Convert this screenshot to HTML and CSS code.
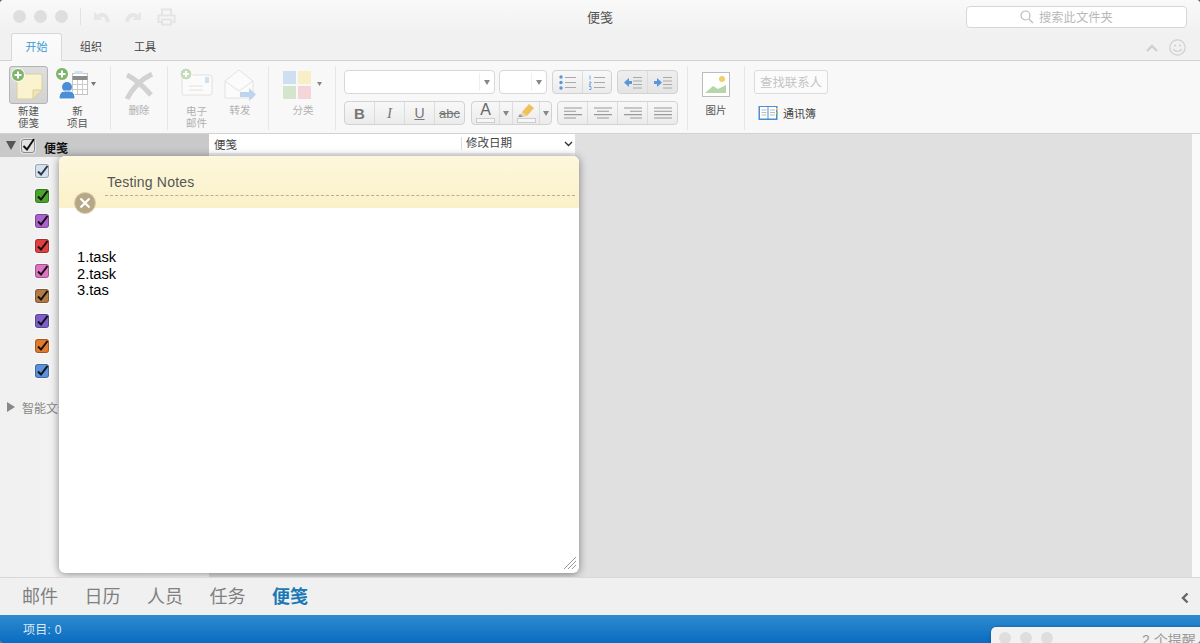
FILE: index.html
```html
<!DOCTYPE html>
<html lang="zh">
<head>
<meta charset="utf-8">
<title>便笺</title>
<link rel="stylesheet" href="styles.css">
</head>
<body>
<div class="window">
  <header class="titlebar">
    <div class="lights"><i></i><i></i><i></i></div>
    <span class="vsep"></span>
    <svg class="qa" width="18" height="16" viewBox="0 0 18 16"><path d="M1 2.500v8.500h8.500z" fill="#e6e6e6"/><path d="M5 8C8 4.500 13.500 5 15 13" fill="none" stroke="#e6e6e6" stroke-width="4"/></svg>
    <svg class="qa qa2" width="18" height="16" viewBox="0 0 18 16"><path d="M17 2.500v8.500H8.500z" fill="#e6e6e6"/><path d="M13 8C10 4.500 4.500 5 3 13" fill="none" stroke="#e6e6e6" stroke-width="4"/></svg>
    <svg class="qa qa3" width="19" height="18" viewBox="0 0 19 18"><path d="M5 7V1.500h9V7M5 14H1.500V7.500h16V14H14M5 11.500h9v5H5z" fill="#f6f6f6" stroke="#e4e4e4" stroke-width="2"/></svg>
    <h1 class="wintitle">便笺</h1>
    <div class="search">
      <svg width="14" height="14" viewBox="0 0 14 14"><circle cx="5.500" cy="5.500" r="4.500" fill="none" stroke="#bbb" stroke-width="1.200"/><path d="M9 9l4 4" stroke="#bbb" stroke-width="1.300"/></svg>
      <span>搜索此文件夹</span>
    </div>
  </header>

  <nav class="tabs">
    <a class="tab active">开始</a>
    <a class="tab">组织</a>
    <a class="tab">工具</a>
    <svg class="collapse" width="12" height="8" viewBox="0 0 12 8"><path d="M1 7l5-5 5 5" fill="none" stroke="#d0d0d0" stroke-width="2.400"/></svg>
    <svg class="smile" width="17" height="17" viewBox="0 0 17 17"><circle cx="8.500" cy="8.500" r="7.700" fill="none" stroke="#cfcfcf" stroke-width="1.200"/><circle cx="6" cy="6.500" r="1" fill="#cfcfcf"/><circle cx="11" cy="6.500" r="1" fill="#cfcfcf"/><path d="M4.500 10c1 3 7 3 8 0" fill="none" stroke="#cfcfcf" stroke-width="1.200"/></svg>
  </nav>

  <section class="ribbon">
    <div class="group g1">
      <div class="tool t-note">
        <div class="ticon pressed">
          <svg width="39" height="38" viewBox="0 0 39 38"><path d="M8 8h25v16l-9 9H8z" fill="#fbf3cf" stroke="#d9cf9f"/><path d="M33 24h-9v9z" fill="#efe4b3" stroke="#d9cf9f"/><circle cx="9" cy="9" r="6.500" fill="#7db56a" stroke="#fff"/><path d="M9 5.500v7M5.500 9h7" stroke="#fff" stroke-width="2"/></svg>
        </div>
        <div class="tlabel on">新建<br>便笺</div>
      </div>
      <div class="tool t-item">
        <div class="ticon">
          <svg width="45" height="39" viewBox="0 0 45 39"><rect x="17.500" y="7.500" width="15" height="21" fill="#fff" stroke="#c4c4c4"/><rect x="17.500" y="10" width="15" height="4" fill="#8c8c8c"/><path d="M22.500 14v14M27.500 14v14M17.500 18.500h15M17.500 23.500h15" stroke="#ccc"/><rect x="20" y="5" width="8" height="3" fill="#cfe0f2"/><circle cx="12" cy="21" r="5" fill="#4a8fd6"/><path d="M4 33c0-8 4-8 8-8s8 0 8 8z" fill="#4a8fd6" stroke="#fff"/><circle cx="7" cy="8" r="6.500" fill="#7db56a" stroke="#fff"/><path d="M7 4.500v7M3.500 8h7" stroke="#fff" stroke-width="2"/><path d="M36 16h5l-2.500 4z" fill="#777"/></svg>
        </div>
        <div class="tlabel on">新<br>项目</div>
      </div>
    </div>

    <div class="group g2">
      <div class="tool t-del">
        <div class="ticon">
          <svg width="30" height="39" viewBox="0 0 30 39"><path d="M3 9c8 4 17 12 24 20M28 8C18 13 9 21 3 33" fill="none" stroke="#d2d2d2" stroke-width="5"/></svg>
        </div>
        <div class="tlabel off up">删除</div>
      </div>
    </div>

    <div class="group g3">
      <div class="tool t-mail">
        <div class="ticon">
          <svg width="33" height="39" viewBox="0 0 33 39"><rect x="2" y="9" width="30" height="20" rx="2" fill="#fbfbfb" stroke="#e0e0e0"/><rect x="25" y="11" width="4" height="6" fill="#cfe0f2"/><path d="M9 20h14M9 24h14" stroke="#e0e0e0"/><circle cx="6" cy="8" r="6" fill="#c3dcb9" stroke="#fff"/><path d="M6 5v6M3 8h6" stroke="#fff" stroke-width="2"/></svg>
        </div>
        <div class="tlabel off">电子<br>邮件</div>
      </div>
      <div class="tool t-fwd">
        <div class="ticon">
          <svg width="32" height="39" viewBox="0 0 32 39"><path d="M1 15L15 4l14 11v17H1z" fill="#fbfbfb" stroke="#e2e2e2"/><path d="M1 15l14 10 14-10" fill="none" stroke="#e2e2e2"/><path d="M16 26h9v-4l7 6.500-7 6.500v-4h-9z" fill="#bcd4ee"/></svg>
        </div>
        <div class="tlabel off up">转发</div>
      </div>
    </div>

    <div class="group g4">
      <div class="tool t-cat">
        <div class="ticon">
          <svg width="40" height="39" viewBox="0 0 40 39"><rect x="0" y="5" width="13" height="13" fill="#cfdff2"/><rect x="15" y="5" width="13" height="13" fill="#f8efc8"/><rect x="0" y="20" width="13" height="13" fill="#d5e4cc"/><rect x="15" y="20" width="13" height="13" fill="#f3d5da"/><path d="M34 16h5l-2.500 4z" fill="#888"/></svg>
        </div>
        <div class="tlabel off up">分类</div>
      </div>
    </div>

    <div class="group g5">
      <div class="fmt-row">
        <div class="combo c-font"><span class="caret-box"><span class="caret"></span></span></div>
        <div class="combo c-size"><span class="caret-box"><span class="caret"></span></span></div>
        <div class="seg s-list">
          <button><svg width="17" height="15" viewBox="0 0 17 15"><path d="M6 2.500h11M6 7.500h11M6 12.500h11" stroke="#aaa" stroke-width="1.200"/><circle cx="2" cy="2" r="1.700" fill="#5a96dc"/><circle cx="2" cy="7.500" r="1.700" fill="#5a96dc"/><circle cx="2" cy="13" r="1.700" fill="#5a96dc"/></svg></button>
          <button><svg width="17" height="15" viewBox="0 0 17 15"><path d="M6 2.500h11M6 7.500h11M6 12.500h11" stroke="#aaa" stroke-width="1.200"/><path d="M2 .5v4M1 7h2v1l-2 1.500v.5h2M1 11.500h2v3H1" fill="none" stroke="#5a96dc" stroke-width=".8"/></svg></button>
        </div>
        <div class="seg s-indent">
          <button><svg width="18" height="13" viewBox="0 0 18 13"><path d="M0 6.500L5 2v3h3v3H5v3z" fill="#5a96dc"/><path d="M9 1.500h9M9 5h9M9 8.500h9M9 12h9" stroke="#aaa" stroke-width="1.100"/></svg></button>
          <button><svg width="18" height="13" viewBox="0 0 18 13"><path d="M8 6.500L3 2v3H0v3h3v3z" fill="#5a96dc"/><path d="M9 1.500h9M9 5h9M9 8.500h9M9 12h9" stroke="#aaa" stroke-width="1.100"/></svg></button>
        </div>
      </div>
      <div class="fmt-row">
        <div class="seg s-style">
          <button class="b-b">B</button>
          <button class="b-i">I</button>
          <button class="b-u">U</button>
          <button class="b-s">abc</button>
        </div>
        <div class="seg s-color">
          <button class="wide"><span class="a-mark">A</span><i class="swatch"></i></button>
          <button class="narrow"><span class="caret dark"></span></button>
          <button class="wide"><svg width="20" height="14" viewBox="0 0 20 14"><path d="M6 9L13 1l5 4-7 8z" fill="#f0c05a"/><path d="M6 9l5 4-3 1-4-1z" fill="#e6d7a8"/><path d="M2 14h5l-3-3z" fill="#999"/></svg><i class="swatch"></i></button>
          <button class="narrow"><span class="caret dark"></span></button>
        </div>
        <div class="seg s-align">
          <button><svg class="al" width="18" height="12" viewBox="0 0 18 12"><path d="M0 1h18M0 4.300h12M0 7.600h18M0 11h12" stroke="#999" stroke-width="1.100"/></svg></button>
          <button><svg class="al" width="18" height="12" viewBox="0 0 18 12"><path d="M0 1h18M3 4.300h12M0 7.600h18M3 11h12" stroke="#999" stroke-width="1.100"/></svg></button>
          <button><svg class="al" width="18" height="12" viewBox="0 0 18 12"><path d="M0 1h18M6 4.300h12M0 7.600h18M6 11h12" stroke="#999" stroke-width="1.100"/></svg></button>
          <button><svg class="al" width="18" height="12" viewBox="0 0 18 12"><path d="M0 1h18M0 4.300h18M0 7.600h18M0 11h18" stroke="#999" stroke-width="1.100"/></svg></button>
        </div>
      </div>
    </div>

    <div class="group g6">
      <div class="tool t-pic">
        <div class="ticon">
          <svg width="28" height="39" viewBox="0 0 28 39"><rect x=".5" y="6.500" width="27" height="24" fill="#fff" stroke="#bbb"/><path d="M3 27l8-7 5 3 8-4v8H3z" fill="#b5d6a8"/><circle cx="20" cy="13" r="3" fill="#f0cf6a"/></svg>
        </div>
        <div class="tlabel on up">图片</div>
      </div>
    </div>

    <div class="group g7">
      <div class="find">查找联系人</div>
      <div class="abook">
        <svg width="20" height="16" viewBox="0 0 20 16"><path d="M.5 1h19v14H.5z" fill="#4a8fd0"/><path d="M2 2h7.500v11.500H2zM10.500 2H18v11.500h-7.500z" fill="#fff"/><path d="M3.500 5h5M3.500 7.500h5M3.500 10h5M12 5h5M12 7.500h5M12 10h5" stroke="#bbb"/><path d="M18 3h2v2h-2z" fill="#f0c05a"/><path d="M18 7h2v2h-2z" fill="#8bbf6a"/></svg>
        <span>通讯簿</span>
      </div>
    </div>
  </section>

  <main class="content">
    <aside class="sidebar">
      <div class="folder-head">
        <span class="tri-down"></span>
        <span class="check c-head"><svg viewBox="0 0 14 14"><path d="M2.500 7l3.500 3.500L13 0" fill="none" stroke="#111" stroke-width="2"/></svg></span>
        <strong>便笺</strong>
      </div>
      <ul class="cats">
        <li><span class="check c-sky"><svg viewBox="0 0 14 14"><path d="M3 7.500l3 3L12.500 2" fill="none" stroke="#334" stroke-width="2"/></svg></span></li>
        <li><span class="check c-green"><svg viewBox="0 0 14 14"><path d="M3 7.500l3 3L12.500 2" fill="none" stroke="#111" stroke-width="2"/></svg></span></li>
        <li><span class="check c-purple"><svg viewBox="0 0 14 14"><path d="M3 7.500l3 3L12.500 2" fill="none" stroke="#111" stroke-width="2"/></svg></span></li>
        <li><span class="check c-red"><svg viewBox="0 0 14 14"><path d="M3 7.500l3 3L12.500 2" fill="none" stroke="#111" stroke-width="2"/></svg></span></li>
        <li><span class="check c-pink"><svg viewBox="0 0 14 14"><path d="M3 7.500l3 3L12.500 2" fill="none" stroke="#111" stroke-width="2"/></svg></span></li>
        <li><span class="check c-brown"><svg viewBox="0 0 14 14"><path d="M3 7.500l3 3L12.500 2" fill="none" stroke="#111" stroke-width="2"/></svg></span></li>
        <li><span class="check c-violet"><svg viewBox="0 0 14 14"><path d="M3 7.500l3 3L12.500 2" fill="none" stroke="#111" stroke-width="2"/></svg></span></li>
        <li><span class="check c-orange"><svg viewBox="0 0 14 14"><path d="M3 7.500l3 3L12.500 2" fill="none" stroke="#111" stroke-width="2"/></svg></span></li>
        <li><span class="check c-blue"><svg viewBox="0 0 14 14"><path d="M3 7.500l3 3L12.500 2" fill="none" stroke="#111" stroke-width="2"/></svg></span></li>
      </ul>
      <div class="smart"><span class="tri-right"></span><span>智能文件夹</span></div>
    </aside>
    <section class="list">
      <div class="list-head">
        <span class="lh-name">便笺</span>
        <span class="lh-sort">修改日期</span>
        <svg width="9" height="6" viewBox="0 0 9 6"><path d="M1 1l3.500 3.500L8 1" fill="none" stroke="#333" stroke-width="1.400"/></svg>
      </div>
    </section>
    <section class="preview"></section>
    <div class="gutter"></div>

    <article class="note">
      <header class="note-head">
        <h2>Testing Notes</h2>
      </header>
      <span class="note-close"><svg width="12" height="12" viewBox="0 0 12 12"><path d="M1.500 1.500l9 9M10.500 1.500l-9 9" stroke="#fff" stroke-width="2.200"/></svg></span>
      <div class="note-body">
        <p>1.task</p>
        <p>2.task</p>
        <p>3.tas</p>
      </div>
      <svg class="grip" width="14" height="14" viewBox="0 0 14 14"><path d="M1 13L13 1M5 13l8-8M9 13l4-4" stroke="#999" stroke-width="1"/></svg>
    </article>
  </main>

  <nav class="modules">
    <a>邮件</a><a>日历</a><a>人员</a><a>任务</a><a class="current">便笺</a>
    <svg class="mod-arrow" width="8" height="12" viewBox="0 0 8 12"><path d="M6.500 1.500L2 6l4.500 4.500" fill="none" stroke="#666" stroke-width="2.400"/></svg>
  </nav>

  <footer class="status">项目: 0</footer>

  <div class="reminder">
    <div class="lights small"><i></i><i></i><i></i></div>
    <span>2 个提醒</span>
  </div>
</div>
</body>
</html>
```
FILE: styles.css
```css
* { box-sizing: border-box; }
html, body { margin: 0; height: 100%; background: #6b5a45; overflow: hidden; }
body { font-family: "Liberation Sans", "Noto Sans CJK SC", sans-serif; }
h1, h2, p, ul { margin: 0; padding: 0; font-weight: normal; }
ul { list-style: none; }

.window {
  position: relative; width: 1200px; height: 643px; display: flex; flex-direction: column;
  overflow: hidden; border-radius: 4px 4px 3px 3px; background: #f7f7f7;
}

/* title bar */
.titlebar {
  height: 33px; flex: none; display: flex; align-items: center; position: relative;
  background: linear-gradient(#f9f9f9, #f1f1f1); padding-left: 13px;
}
.lights { display: flex; gap: 8px; }
.lights i { width: 13px; height: 13px; border-radius: 50%; background: #dedede; display: block; }
.vsep { width: 1px; height: 17px; background: #e2e2e2; margin: 0 12px 0 12px; }
.qa { flex: none; }
.qa2 { margin-left: 13px; }
.qa3 { margin-left: 15px; }
.wintitle { position: absolute; left: 0; right: 0; text-align: center; font-size: 13px; line-height: 18px; top: 9px; color: #555; pointer-events: none; }
.search {
  position: absolute; left: 966px; top: 6px; width: 221px; height: 22px; background: #fff;
  border: 1px solid #d6d6d6; border-radius: 4px; display: flex; align-items: center; padding-left: 53px; gap: 5px;
  font-size: 12.300px; color: #b9b9b9;
}

/* tabs */
.tabs {
  height: 28px; flex: none; display: flex; position: relative; padding-left: 11px;
  background: #f1f1f1; border-bottom: 1px solid #d2d2d2;
  font-size: 11px; color: #444;
}
.tab { width: 54px; text-align: center; line-height: 28px; }
.tab.active {
  width: 51px; height: 28px; color: #3b9ad6; background: linear-gradient(#fbfbfb, #f8f8f8);
  border: 1px solid #d8d8d8; border-bottom: 0; border-radius: 3px 3px 0 0; line-height: 27px; margin-right: 2px;
}
.collapse { position: absolute; left: 1146px; top: 11px; }
.smile { position: absolute; left: 1169px; top: 6px; }

/* ribbon */
.ribbon {
  height: 73px; flex: none; display: flex; align-items: flex-start; background: #f8f8f8;
  border-bottom: 1px solid #d2d2d2; padding-top: 5px;
}
.group { height: 64px; border-right: 1px solid #e6e6e6; display: flex; flex: none; }
.g1 { width: 111px; padding-left: 9px; gap: 7px; }
.g2 { width: 57px; padding-left: 13px; }
.g3 { width: 101px; padding-left: 12px; gap: 11px; }
.g4 { width: 67px; padding-left: 14px; }
.g5 { width: 352px; padding: 4px 0 0 8px; flex-direction: column; gap: 7px; }
.g6 { width: 57px; padding-left: 14px; }
.g7 { border-right: 0; padding: 4px 0 0 9px; flex-direction: column; }

.tool { display: flex; flex-direction: column; align-items: center; }
.t-note { width: 39px; }
.t-item { width: 45px; }
.t-del { width: 30px; }
.t-mail { width: 33px; }
.t-fwd { width: 32px; }
.t-cat { width: 40px; }
.t-pic { width: 28px; }
.ticon { height: 39px; display: flex; }
.ticon.pressed { height: 38px; margin-bottom: 1px; background: linear-gradient(#dedede, #d2d2d2); border: 1px solid #b4b4b4; border-radius: 3px; }
.ticon.pressed svg { margin: -1px; }
.tlabel { font-size: 10.500px; line-height: 12px; text-align: center; white-space: nowrap; }
.tlabel.on { color: #555; }
.tlabel.off { color: #b0b0b0; }
.tlabel.up { margin-top: -1px; }

.fmt-row { display: flex; height: 24px; gap: 5px; }
.combo {
  height: 24px; background: #fff; border: 1px solid #d8d8d8; border-radius: 4px; display: flex;
  justify-content: flex-end; align-items: center;
}
.c-font { width: 151px; margin-right: -1px; }
.c-size { width: 48px; }
.caret-box { width: 15px; height: 18px; border-left: 1px solid #efefef; display: flex; align-items: center; justify-content: center; }
.caret { width: 0; height: 0; border: 3px solid transparent; border-top: 5px solid #888; border-bottom: 0; display: block; }

.seg {
  display: flex; height: 24px; border: 1px solid #d2d2d2; border-radius: 4px; overflow: hidden;
  background: linear-gradient(#f8f8f8, #ebebeb);
}
.seg button {
  flex: 1; min-width: 0; border: 0; background: none; padding: 0; border-left: 1px solid #dcdcdc;
  display: flex; flex-direction: column; align-items: center; justify-content: center; color: #777; font-family: inherit;
}
.seg button:first-child { border-left: 0; }
.s-list { width: 60px; }
.s-indent { width: 61px; background: linear-gradient(#eeeeee, #e4e4e4); }
.s-style { width: 121px; }
.s-color { width: 81px; margin-left: 1px; }
.s-align { width: 121px; }
.b-b { font-size: 15px; font-weight: bold; }
.seg .b-i { font-size: 15px; font-style: italic; font-family: "Liberation Serif", serif; }
.b-u { font-size: 14px; text-decoration: underline; }
.b-s { font-size: 13px; text-decoration: line-through; }
.seg .wide { flex: none; width: 27px; }
.seg .narrow { flex: none; width: 13px; }
.a-mark { font-size: 16px; line-height: 14px; color: #666; }
.swatch { display: block; width: 19px; height: 5px; border: 1px solid #ccc; margin-top: 1px; background: #f6f6f6; flex: none; }

.find {
  width: 74px; height: 24px; border: 1px solid #dcdcdc; border-radius: 3px; background: #fbfbfb; color: #c4c4c4;
  font-size: 12.400px; line-height: 25px; text-align: center; white-space: nowrap;
}
.abook { display: flex; align-items: center; gap: 5px; margin: 11px 0 0 4px; font-size: 11px; color: #444; }

/* content */
.content { flex: 1; min-height: 0; display: flex; position: relative; }
.sidebar { width: 209px; flex: none; background: linear-gradient(90deg, #f0f0f0, #f8f8f8); position: relative; }
.folder-head {
  height: 23px; background: #c9c9c9; display: flex; align-items: center; padding-left: 6px;
  font-size: 12px; color: #111;
}
.folder-head strong { margin: 3px 0 0 9px; }
.tri-down { width: 0; height: 0; border: 5px solid transparent; border-top: 9px solid #555; border-bottom: 0; }
.check { width: 14px; height: 14px; border-radius: 3px; display: block; border: 1px solid rgba(0,0,0,.28); box-shadow: 0 0 0 1px rgba(255,255,255,.5); }
.check svg { display: block; width: 14px; height: 14px; margin: -1px; overflow: visible; }
.c-head { background: #e2e2e2; margin-left: 5px; border-color: #8a8a8a; }
.c-sky { background: #d3e2f0; }
.c-green { background: #4ba52c; }
.c-purple { background: #ac62cc; }
.c-red { background: #e2403f; }
.c-pink { background: #e074c4; }
.c-brown { background: #b27a44; }
.c-violet { background: #7c5fca; }
.c-orange { background: #e27a2b; }
.c-blue { background: #5b92da; }
.cats { padding-top: 2px; }
.cats li { height: 25px; padding: 5px 0 0 35px; }
.smart { display: flex; align-items: center; margin-top: 14px; padding-left: 7px; gap: 7px; font-size: 12px; color: #888; height: 18px; }
.tri-right { width: 0; height: 0; border: 5px solid transparent; border-left: 8px solid #888; border-right: 0; }

.list { width: 366px; flex: none; background: #dedede; }
.list-head {
  height: 23px; display: flex; align-items: center; font-size: 11.500px; color: #444; padding: 0 0 0 5px;
  background: #fff; border-bottom: 4px solid #f0f0f4;
}
.lh-name { width: 247px; }
.lh-sort { width: 103px; border-left: 1px solid #ddd; padding-left: 4px; line-height: 13px; }
.preview { flex: 1; background: #e0e0e0; }
.gutter { width: 8px; flex: none; background: #fafafa; }

/* note window */
.note {
  position: absolute; left: 59px; top: 22px; width: 520px; height: 417px; background: #fff;
  border-radius: 6px; box-shadow: 0 1px 8px rgba(0,0,0,.45);
}
.note-head {
  height: 52px; background: linear-gradient(#fdf7dc, #fbf1c8); border-radius: 6px 6px 0 0; position: relative;
  padding: 18px 0 0 48px;
}
.note-head::after { content: ""; position: absolute; left: 46px; right: 4px; top: 39px; border-top: 1px dashed #b9b08c; }
.note-head h2 { font-size: 14px; line-height: 16px; color: #555; letter-spacing: .2px; }
.note-close {
  position: absolute; left: 15px; top: 36px; width: 22px; height: 22px; border-radius: 50%;
  background: #b7a784; display: flex; align-items: center; justify-content: center;
  border: 1px solid #d9ceb4;
}
.note-body { padding-top: 41px; padding-left: 18px; font-size: 14.700px; line-height: 16.700px; color: #000; }
.grip { position: absolute; right: 2px; bottom: 3px; }

/* module switcher */
.modules {
  height: 38px; flex: none; display: flex; align-items: center; padding: 0 0 3px 22px; gap: 26.500px; position: relative;
  background: #f0f0f0; border-top: 1px solid #d8d8d8; font-size: 18px; color: #808080;
}
.modules a.current { color: #1a78b6; font-weight: bold; }
.mod-arrow { position: absolute; left: 1181px; top: 14px; }

/* status bar */
.status {
  height: 28px; flex: none; background: linear-gradient(#2f8bd0, #0a6bbf); color: #dbeaf6; font-size: 12px;
  line-height: 30px; padding-left: 23px; letter-spacing: .3px;
}
.reminder {
  position: absolute; left: 991px; top: 627px; width: 209px; height: 30px; background: #f2f2f2;
  border-radius: 5px 0 0 0; display: flex; padding: 5px 0 0 8px; font-size: 14px; color: #999; box-shadow: 0 0 3px rgba(0,0,0,.3);
}
.reminder > span { margin-left: 89px; line-height: 16px; white-space: nowrap; }
.lights.small { gap: 9px; }
.lights.small i { width: 12px; height: 12px; }
```
